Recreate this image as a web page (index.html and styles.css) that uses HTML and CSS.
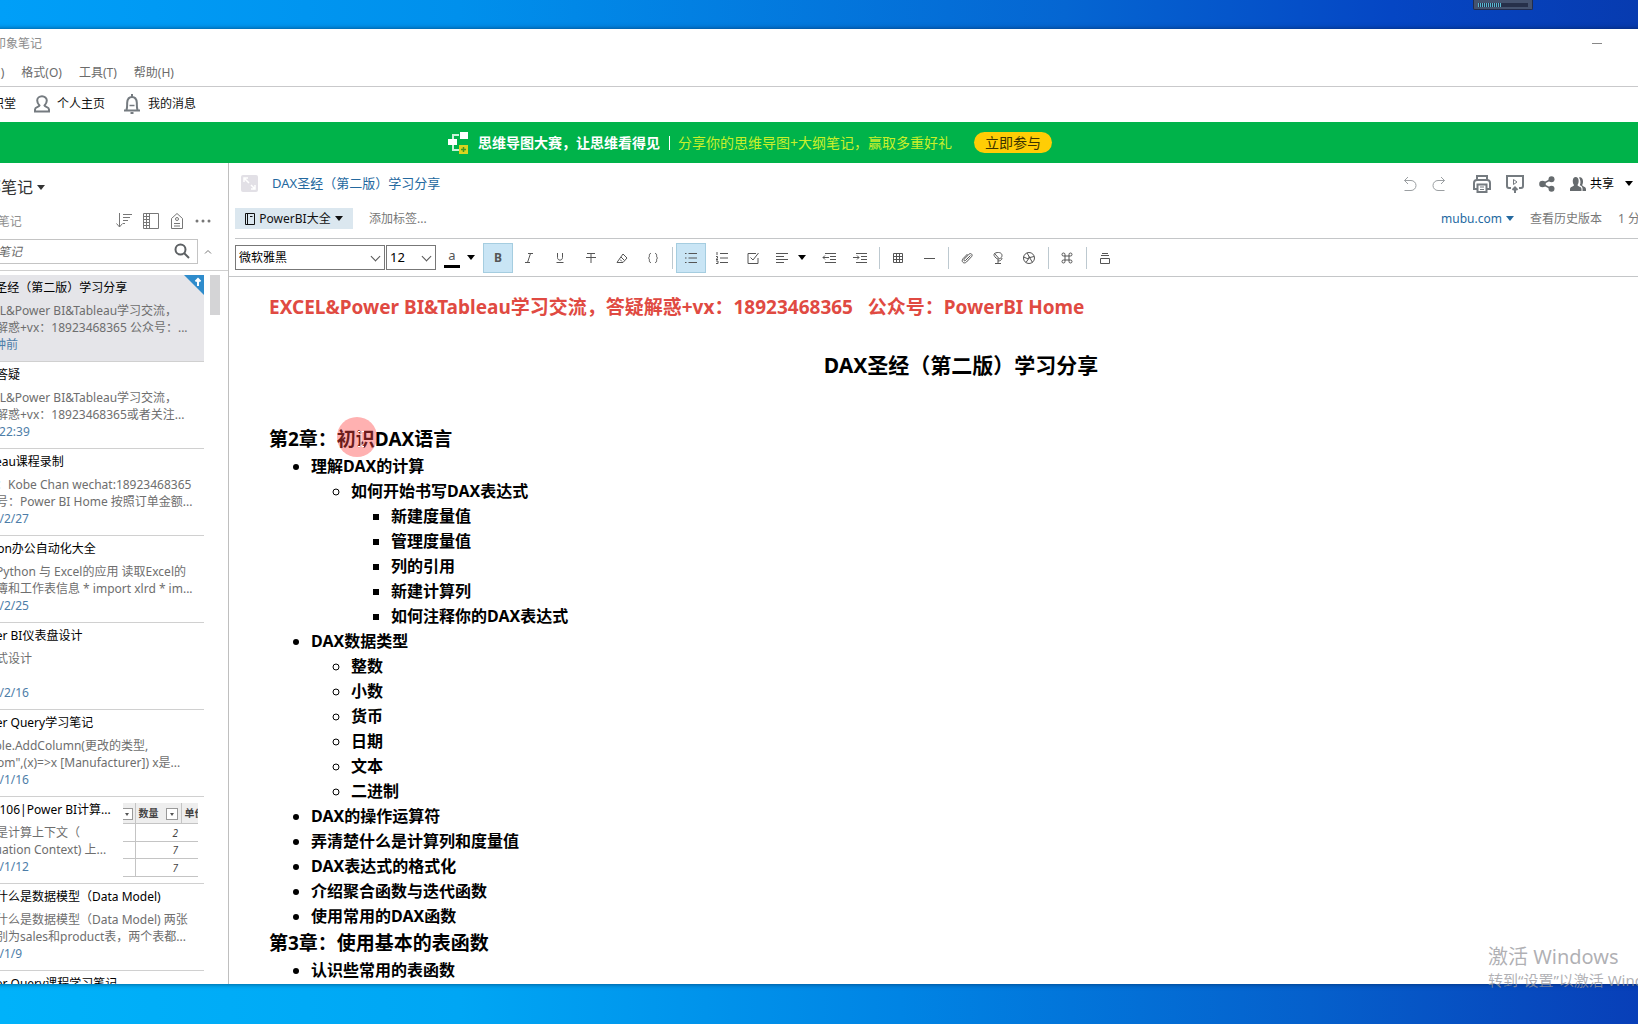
FILE: index.html
```html
<!DOCTYPE html>
<html lang="zh-CN">
<head>
<meta charset="utf-8">
<title>印象笔记</title>
<link rel="stylesheet" href="styles.css">
</head>
<body>
<svg class="defs" aria-hidden="true">
  <symbol id="caret" viewBox="0 0 8 5"><path d="M0 0h8L4 5z" fill="currentColor"/></symbol>
</svg>
<div class="desktop">
  <div class="window">
    <header class="titlebar">
      <span>印象笔记</span>
      <button class="minimize" aria-label="最小化"></button>
    </header>
    <nav class="menu">
      <a href="#">笔记(N)</a><a href="#">格式(O)</a><a href="#">工具(T)</a><a href="#">帮助(H)</a>
    </nav>
    <nav class="shortcuts">
      <a href="#">知识堂</a>
      <a href="#"><svg width="16" height="18" viewBox="0 0 16 18" class="line2"><path d="M5.500 10.500C4 9 3.200 7.500 3.200 5.500a4.800 4.300 0 0 1 9.600 0c0 2-.8 3.500-2.300 5 .3 1.500 4.500 1.500 4.500 4v2H1v-2c0-2.500 4.200-2.500 4.500-4z"/></svg>个人主页</a>
      <a href="#"><svg width="18" height="20" viewBox="0 0 18 20" class="line2"><path d="M9 0v3M1 16.500h16M3.500 16C4.500 13 4 11 4.200 8.500 4.500 5 6 3 9 3s4.500 2 4.800 5.500c.2 2.500-.3 4.500.7 7.500"/><path d="M6.500 11.500h5" stroke-width="1.500"/><path d="M7.500 19h3"/></svg>我的消息</a>
    </nav>
    <section class="banner">
      <svg width="20" height="24" viewBox="0 0 20 24"><path d="M5 8V4h6M5 13v6h6" fill="none" stroke="#c9f2d8" stroke-width="2"/><path d="M0 8h9v6H0zM12 1h8v7h-8z" fill="#fff"/><path d="M11 14h9v9h-9z" fill="#d8d420"/><path d="M15.500 16v5M13 18.500h5" stroke="#3f9a20" stroke-width="1.500"/></svg>
      <strong>思维导图大赛，让思维看得见</strong>
      <i class="bar"></i>
      <span>分享你的思维导图+大纲笔记，赢取多重好礼</span>
      <button>立即参与</button>
    </section>
    <div class="main">
      <aside class="sidebar">
        <h2 class="sidebar-title">全部笔记<svg width="8" height="5"><use href="#caret"/></svg></h2>
        <div class="meta">
          <span>37 条笔记</span>
          <button aria-label="排序"><svg width="16" height="16" viewBox="0 0 16 16" class="line"><path d="M3.500 0v14M.5 10.500l3 3.500 3-3.500M7 1.500h9M7 4.500h7M7 7.500h5M7 10.500h2"/></svg></button>
          <button aria-label="视图"><svg width="16" height="16" viewBox="0 0 16 16" class="line"><path d="M.5.5h15v15H.5zM6.500.5v15M.5 3.500h6M.5 6.500h6M.5 9.500h6M.5 12.500h6M3.500.5v15"/></svg></button>
          <button aria-label="标签"><svg width="14" height="16" viewBox="0 0 14 16" class="line"><path d="M1.500 15.500v-10L7 .5l5.500 5v10zM4 10.500h6M4 13h6"/><circle cx="7" cy="6" r="1.500"/></svg></button>
          <button aria-label="更多"><svg width="16" height="4" viewBox="0 0 16 4" fill="#777"><circle cx="2" cy="2" r="1.500"/><circle cx="8" cy="2" r="1.500"/><circle cx="14" cy="2" r="1.500"/></svg></button>
        </div>
        <div class="search">
          <label class="search-box"><input type="text" placeholder="搜索笔记" aria-label="搜索笔记"><svg width="16" height="16" viewBox="0 0 16 16" fill="none" stroke="#5c6063" stroke-width="2"><circle cx="6.500" cy="6.500" r="5"/><path d="M10 10l5 5"/></svg></label>
          <button aria-label="收起"><svg width="8" height="5" viewBox="0 0 8 5" class="line"><path d="M1 4.500l3-3 3 3"/></svg></button>
        </div>
        <div class="list">
          <div class="notes">
            <article class="note selected"><h3>DAX圣经（第二版）学习分享</h3><p>EXCEL&amp;Power BI&amp;Tableau学习交流，<br>答疑解惑+vx：18923468365 公众号：...</p><time>1 分钟前</time>
              <svg class="sync" width="20" height="20" viewBox="0 0 20 20"><path d="M0 0h20v20z" fill="#2f8ccc"/><path d="M14 11V4M11.500 6.500L14 4l2.500 2.500" fill="none" stroke="#fff" stroke-width="2"/></svg></article>
            <article class="note"><h3>学习答疑</h3><p>EXCEL&amp;Power BI&amp;Tableau学习交流，<br>答疑解惑+vx：18923468365或者关注...</p><time>昨天 22:39</time></article>
            <article class="note"><h3>Tableau课程录制</h3><p>作者：Kobe Chan wechat:18923468365<br>公众号：Power BI Home 按照订单金额...</p><time>2022/2/27</time></article>
            <article class="note"><h3>Python办公自动化大全</h3><p>一、Python 与 Excel的应用 读取Excel的<br>工作簿和工作表信息 * import xlrd * im...</p><time>2022/2/25</time></article>
            <article class="note"><h3>Power BI仪表盘设计</h3><p>交互式设计<br>&nbsp;</p><time>2022/2/16</time></article>
            <article class="note"><h3>Power Query学习笔记</h3><p>= Table.AddColumn(更改的类型,<br>Custom",(x)=&gt;x [Manufacturer]) x是...</p><time>2022/1/16</time></article>
            <article class="note with-thumb"><div><h3>Note106|Power BI计算...</h3><p>什么是计算上下文（<br>Evaluation Context) 上...</p><time>2022/1/12</time></div>
              <table class="thumb">
                <tr><th><i class="filter"></i></th><th>数量<i class="filter"></i></th><th>单价</th></tr>
                <tr><td></td><td>2</td><td></td></tr>
                <tr><td></td><td>7</td><td></td></tr>
                <tr><td></td><td>7</td><td></td></tr>
              </table></article>
            <article class="note"><h3>一、什么是数据模型（Data Model)</h3><p>一、什么是数据模型（Data Model) 两张<br>表分别为sales和product表，两个表都...</p><time>2022/1/9</time></article>
            <article class="note"><h3>Power Query课程学习笔记</h3></article>
          </div>
          <div class="scroll"><i></i></div>
        </div>
      </aside>
      <section class="editor">
        <div class="note-head">
          <svg width="17" height="17" viewBox="0 0 17 17"><rect width="17" height="17" rx="2" fill="#e2e0e6"/><path d="M3 7V3h4M3 3l5 5M14 10v4h-4M14 14l-4-4" fill="none" stroke="#fff" stroke-width="1.500"/></svg>
          <a href="#" class="note-title">DAX圣经（第二版）学习分享</a>
          <div class="actions">
            <button aria-label="撤销"><svg width="14" height="16" viewBox="0 0 14 16" class="faint"><path d="M5 1L1.500 4.500 5 8M1.500 4.500H8a5 5 0 0 1 0 10H1.500"/></svg></button>
            <button aria-label="重做"><svg width="14" height="16" viewBox="0 0 14 16" class="faint"><path d="M9 1l3.500 3.500L9 8M12.500 4.500H6a5 5 0 0 0 0 10h6.500"/></svg></button>
            <button aria-label="打印"><svg width="18" height="18" viewBox="0 0 18 18" class="line2"><path d="M4 5V1h10v4M4 14H1V8c0-2 1-3 3-3h10c2 0 3 1 3 3v6h-3M4.500 9.500h9V17h-9z"/><path d="M7 12h4M7 14.500h4" stroke-width="1"/></svg></button>
            <button aria-label="演示"><svg width="18" height="18" viewBox="0 0 18 18" class="line2"><path d="M5 13H3c-1.500 0-2-.5-2-2V1h16v10c0 1.500-.5 2-2 2h-2M9 18v-5M6.500 15L9 12.500l2.500 2.500"/><path d="M7.500 4.500v5L11 7z" stroke-width="1"/></svg></button>
            <button aria-label="分享"><svg width="16" height="16" viewBox="0 0 16 16" fill="#666b6e"><circle cx="3.500" cy="8" r="3.300"/><circle cx="12.500" cy="3.200" r="3"/><circle cx="12.500" cy="12.800" r="3"/><path d="M3 8l10-5M3 8l10 5" stroke="#666b6e" stroke-width="1.500"/></svg></button>
            <button class="share"><svg width="16" height="15" viewBox="0 0 16 15" fill="#666b6e"><path d="M4 9C2.300 7 2 1 5.700 1s3.500 6 1.800 8c0 1.500 4 1.500 4 4v2H0v-2c0-2.500 4-2.500 4-4z"/><path d="M9 1.500c4-1.500 5 5 3.200 7.500 0 1.500 3.800 1.500 3.800 4v2h-3.500v-2.500c0-1.500-1-2.500-2.700-3.200C11 7 10.500 3.500 9 1.500z"/></svg>共享<svg width="8" height="5"><use href="#caret"/></svg></button>
          </div>
        </div>
        <div class="note-info">
          <button class="notebook"><svg width="10" height="12" viewBox="0 0 10 12" fill="none" stroke="#111"><path d="M.5.5h9v11h-9zM2.500.5v11M5 3.500h2.500"/></svg>PowerBI大全<svg width="8" height="5"><use href="#caret"/></svg></button>
          <a href="#" class="tag">添加标签...</a>
          <a href="#" class="source">mubu.com<svg width="8" height="5"><use href="#caret"/></svg></a>
          <a href="#" class="history">查看历史版本</a>
          <span class="updated">1 分钟前更新</span>
        </div>
        <div class="toolbar">
          <label class="pick font"><select aria-label="字体"><option>微软雅黑</option></select></label>
          <label class="pick size"><select aria-label="字号"><option>12</option></select></label>
          <button class="color" aria-label="文字颜色"><span class="ink">a</span><svg width="8" height="5"><use href="#caret"/></svg></button>
          <button class="on" aria-label="粗体"><b>B</b></button>
          <button aria-label="斜体"><svg width="12" height="12" viewBox="0 0 12 12"><path d="M5 1.500h5M2 10.500h5M7.500 1.500l-3 9"/></svg></button>
          <button aria-label="下划线"><svg width="12" height="12" viewBox="0 0 12 12"><path d="M3.500 1v4.500c0 3.500 5 3.500 5 0V1M2.500 10.500h7"/></svg></button>
          <button aria-label="删除线"><svg width="12" height="12" viewBox="0 0 12 12"><path d="M2 1.500h8M1 5.500h10M6 1.500V11"/></svg></button>
          <button aria-label="高亮"><svg width="12" height="12" viewBox="0 0 12 12"><path d="M1 10.500h6l4-4.500-4-4-4 5.500-2 3M5 5l3.500 3.500M4 7.500l2 2"/></svg></button>
          <button aria-label="代码"><svg width="12" height="12" viewBox="0 0 12 12"><path d="M4 1.500c-3 0-.5 3.500-2.500 4.500C3.500 7 1 10.500 4 10.500M8 1.500c3 0 .5 3.500 2.500 4.500C8.500 7 11 10.500 8 10.500"/></svg></button>
          <i class="sep"></i>
          <button class="on" aria-label="项目符号"><svg width="12" height="12" viewBox="0 0 12 12"><path d="M0 1.500h1.500M0 6h1.500M0 10.500h1.500M3.500 1.500H12M3.500 6H12M3.500 10.500H12"/></svg></button>
          <button aria-label="编号"><svg width="12" height="12" viewBox="0 0 12 12"><path d="M1 0v3M0 4.500h1.500V6L0 7.500h2M0 9h2v2.500H0M4 1.500h8M4 6h8M4 10.500h8"/></svg></button>
          <button aria-label="待办"><svg width="12" height="12" viewBox="0 0 12 12"><path d="M9 1.500H1v10h10V6M3.500 5.500L6 8l5.500-7"/></svg></button>
          <button class="align" aria-label="对齐"><svg width="12" height="12" viewBox="0 0 12 12"><path d="M0 1.500h12M0 4.500h8M0 7.500h12M0 10.500h8"/></svg><svg class="arrow" width="8" height="5"><use href="#caret"/></svg></button>
          <button aria-label="减少缩进"><svg width="14" height="12" viewBox="0 0 14 12"><path d="M3 1.500h11M8 4.500h6M8 7.500h6M3 10.500h11M1 5.500h6M3 3.500l-2 2 2 2"/></svg></button>
          <button aria-label="增加缩进"><svg width="14" height="12" viewBox="0 0 14 12"><path d="M3 1.500h11M8 4.500h6M8 7.500h6M3 10.500h11M0 5.500h6M4 3.500l2 2-2 2"/></svg></button>
          <i class="sep"></i>
          <button aria-label="表格"><svg width="12" height="12" viewBox="0 0 12 12"><path d="M1.500 1.500h9v9h-9zM4.500 1.500v9M7.500 1.500v9M1.500 4.500h9M1.500 7.500h9"/></svg></button>
          <button aria-label="分隔线"><svg width="12" height="12" viewBox="0 0 12 12"><path d="M1 6.500h11"/></svg></button>
          <i class="sep"></i>
          <button aria-label="附件"><svg width="12" height="12" viewBox="0 0 12 12"><path d="M9.500 3.500l-5 5c-1 1-2.300-.3-1.300-1.300L8 2.200c1.800-1.700 4.300.6 2.500 2.500L5.500 10C2.800 12.500-.3 9.300 2 6.700L6.500 2"/></svg></button>
          <button aria-label="录音"><svg width="12" height="12" viewBox="0 0 12 12"><path d="M2.500 1.500L7 6.500M2.500 1.500C6-.5 10 .5 10 3.500S6 8 4 6 1.500 3 2.500 1.500M6 7v4M3 11.500h6M10 6c0 2-2 3-4 3"/></svg></button>
          <button aria-label="拍照"><svg width="12" height="12" viewBox="0 0 12 12"><circle cx="6" cy="6" r="5.500"/><path d="M4 1l3 5M11 4.500L5 6M9.500 10.500L6 4.500M3 10.500L6 6M.5 5l5 2"/></svg></button>
          <i class="sep"></i>
          <button aria-label="快捷键"><svg width="12" height="12" viewBox="0 0 12 12"><path d="M4 4V2.700A1.500 1.500 0 1 0 2.700 4h6.600A1.500 1.500 0 1 0 8 2.700v6.600A1.500 1.500 0 1 0 9.300 8H2.700A1.500 1.500 0 1 0 4 9.300z"/></svg></button>
          <i class="sep"></i>
          <button aria-label="模板"><svg width="12" height="12" viewBox="0 0 12 12"><path d="M3 1.500h6M2 3.500h8M1.500 6.500h9v5h-9z"/></svg></button>
        </div>
        <article class="document">
          <p class="contact">EXCEL&amp;Power BI&amp;Tableau学习交流，答疑解惑+vx：18923468365&nbsp;&nbsp; 公众号：PowerBI Home</p>
          <h1>DAX圣经（第二版）学习分享</h1>
          <h2>第2章：初识DAX语言</h2>
          <ul>
            <li>理解DAX的计算
              <ul><li>如何开始书写DAX表达式
                <ul><li>新建度量值</li><li>管理度量值</li><li>列的引用</li><li>新建计算列</li><li>如何注释你的DAX表达式</li></ul></li></ul></li>
            <li>DAX数据类型
              <ul><li>整数</li><li>小数</li><li>货币</li><li>日期</li><li>文本</li><li>二进制</li></ul></li>
            <li>DAX的操作运算符</li>
            <li>弄清楚什么是计算列和度量值</li>
            <li>DAX表达式的格式化</li>
            <li>介绍聚合函数与迭代函数</li>
            <li>使用常用的DAX函数</li>
          </ul>
          <h2>第3章：使用基本的表函数</h2>
          <ul><li>认识些常用的表函数</li></ul>
        </article>
      </section>
    </div>
  </div>
  <div class="recorder"><i></i></div>
  <div class="pointer"><svg width="8" height="16" viewBox="0 0 8 16"><path d="M1 .5h2l1 1 1-1h2M4 1.500v13M1 15.500h2l1-1 1 1h2" fill="none" stroke="#fff"/></svg></div>
  <div class="watermark"><div>激活 Windows</div><p>转到“设置”以激活 Windows。</p></div>
</div>
</body>
</html>
```
FILE: styles.css
```css
* { box-sizing: border-box; }
body, h1, h2, h3, p, ul { margin: 0; padding: 0; }
body { font: 12px/17px "Noto Sans", "Noto Sans CJK SC", sans-serif; color: #111; overflow: hidden; }
a { color: inherit; text-decoration: none; }
button { font: inherit; color: inherit; background: none; border: 0; padding: 0; display: flex; align-items: center; justify-content: center; }
svg { display: block; flex: none; }
.defs { position: absolute; width: 0; height: 0; }
.line { fill: none; stroke: #777; }
.line2 { fill: none; stroke: #757b80; stroke-width: 2; }
.faint { fill: none; stroke: #9b9fa2; }

/* desktop and window */
.desktop {
  position: relative; height: 100vh; padding: 29px 0 40px; overflow: hidden;
  background:
    linear-gradient(90deg, #009ff8, #0090ec 28%, #0566d2 65%, #0546c4 85%, #073bb0) top / 100% 29px no-repeat,
    linear-gradient(90deg, #00b2fa, #00a6f4 28%, #0084e4 55%, #0560cc 80%, #083fb8) bottom / 100% 40px no-repeat;
}
.window { display: flex; flex-direction: column; height: 100%; margin: 0 -74px 0 -36px; background: #fff; box-shadow: 0 0 5px rgba(0, 20, 50, .6); overflow: hidden; }
.titlebar { display: flex; justify-content: space-between; align-items: center; height: 30px; flex: none; padding: 0 92px 2px 30px; color: #8c8c8c; }
.minimize { width: 46px; height: 28px; }
.minimize::before { content: ""; width: 10px; height: 1px; background: #888; }
.menu { display: flex; align-items: center; gap: 17px; height: 28px; flex: none; border-bottom: 1px solid #c9c9cb; color: #6b6b6b; }
.shortcuts { display: flex; align-items: center; gap: 18px; height: 35px; flex: none; padding: 0 16px 2px; }
.shortcuts a { display: flex; align-items: center; gap: 7px; }
.banner { display: flex; align-items: center; height: 41px; flex: none; padding-left: 484px; background: #00b34a; color: #fff; font-size: 14px; }
.banner strong { margin-left: 10px; }
.banner .bar { width: 1px; height: 14px; margin: 0 8px 0 9px; background: #fff; }
.banner span { color: #c8f02a; }
.banner button { width: 78px; height: 21px; margin-left: 22px; border-radius: 11px; background: #ffcd05; color: #3b3300; }
.main { display: flex; flex: 1; min-height: 0; }

/* note list */
.sidebar { width: 265px; flex: none; border-right: 1px solid #bfbfbf; display: flex; flex-direction: column; }
.sidebar-title { display: flex; align-items: center; gap: 4px; height: 49px; flex: none; padding-left: 5px; font-size: 16px; font-weight: 400; color: #333; }
.meta { display: flex; align-items: center; gap: 11px; height: 18px; flex: none; padding: 0 17px 0 5px; color: #8f8f8f; }
.meta span { flex: 1; }
.search { display: flex; align-items: center; gap: 6px; height: 41px; flex: none; padding: 2px 16px 0 0; border-bottom: 1px solid #cfcfcf; }
.search-box { display: flex; align-items: center; width: 234px; height: 25px; padding: 0 7px 0 9px; border: 1px solid #c4c4c4; }
.search-box input { flex: 1; min-width: 0; border: 0; padding: 0; outline: 0; font: italic 12px/17px "Noto Sans", "Noto Sans CJK SC", sans-serif; }
.search-box input::placeholder { color: #666; opacity: 1; }
.list { display: flex; flex: 1; min-height: 0; padding-top: 4px; gap: 6px; overflow: hidden; }
.notes { width: 240px; }
.note { position: relative; height: 87px; padding: 4px 6px 0 8px; border-bottom: 1px solid #d0d0d0; white-space: nowrap; }
.note h3 { font-size: 12px; font-weight: 400; margin-bottom: 6px; color: #000; }
.note p { color: #6e6e6e; }
.note time { display: block; color: #4d7da8; }
.selected { background: #e5e5e9; }
.sync { position: absolute; top: 0; right: 0; }
.with-thumb { display: flex; justify-content: space-between; }
.thumb { width: 75px; height: 74px; margin-top: 2px; table-layout: fixed; border-collapse: collapse; font-size: 10px; line-height: 16px; color: #444; border-bottom: 1px solid #aaa; overflow: hidden; }
.thumb th, .thumb td { padding: 0; height: 17px; border-bottom: 1px solid #c4c4c4; overflow: hidden; text-align: left; }
.thumb th { background: #eee; white-space: nowrap; height: 20px; }
.thumb td { font-style: italic; text-align: right; padding-right: 3px; }
.thumb tr > :first-child { width: 12px; border-right: 1px solid #c4c4c4; padding: 0; }
.thumb tr > :nth-child(2) { width: 46px; }
.thumb th:nth-child(2) { padding-left: 3px; border-right: 1px solid #c4c4c4; }
.thumb th:nth-child(3) { padding-left: 3px; }
.filter { display: inline-flex; align-items: center; justify-content: center; width: 12px; height: 12px; margin-left: 7px; border: 1px solid #999; background: #fff; vertical-align: middle; }
.filter::before { content: ""; border: 2px solid transparent; border-top: 3px solid #555; border-bottom: 0; }
.thumb th:first-child .filter { margin-left: -2px; }
.scroll i { display: block; width: 10px; height: 40px; background: #d4d4d6; }

/* editor */
.editor { flex: 1; min-width: 0; display: flex; flex-direction: column; }
.note-head { display: flex; align-items: center; height: 41px; flex: none; padding-left: 12px; }
.note-title { margin-left: 14px; font-size: 13px; color: #24699f; }
.actions { display: flex; align-items: center; gap: 15px; margin-left: auto; padding-right: 79px; }
.actions button:nth-child(3) { margin-left: 12px; }
.share { gap: 4px; color: #000; }
.share svg:last-child { margin-left: 7px; }
.note-info { display: flex; align-items: center; height: 35px; flex: none; margin-left: 6px; border-bottom: 1px solid #c4c6c8; padding-bottom: 5px; color: #777; }
.notebook { width: 118px; height: 21px; gap: 4px; background: #dbe7ef; color: #111; }
.tag { margin-left: 16px; }
.source { display: flex; align-items: center; gap: 4px; margin-left: auto; color: #24699f; }
.history { margin-left: 16px; }
.updated { width: 94px; margin-left: 16px; }
.toolbar { display: flex; align-items: center; gap: 1px; height: 38px; flex: none; padding-left: 6px; border-bottom: 1px solid #c4c6c8; color: #555; }
.toolbar button { width: 30px; height: 30px; border: 1px solid transparent; }
.toolbar .on { background: #c9e5f5; border-color: #a5cde0; }
.toolbar svg { fill: none; stroke: #555; }
.toolbar .color svg, .toolbar .arrow { color: #000; stroke: none; }
.toolbar .color { width: 45px; gap: 7px; }
.toolbar .align { width: 44px; gap: 10px; }
.ink { width: 16px; height: 21px; border-bottom: 3px solid #000; font-size: 13px; line-height: 16px; }
.sep { width: 1px; height: 22px; margin: 0 2px 0 3px; background: #bdc9d0; }
.pick { position: relative; display: flex; height: 25px; }
.pick.font { width: 150px; }
.pick.size { width: 50px; }
.pick select { appearance: none; width: 100%; border: 1px solid #777; border-radius: 0; background: #fff; padding: 0 3px; font: 12px/17px "Noto Sans", "Noto Sans CJK SC", sans-serif; color: #000; }
.pick.size select { font-size: 13px; }
.pick::after { content: ""; position: absolute; right: 6px; top: 8px; width: 6px; height: 6px; border: solid #555; border-width: 0 1px 1px 0; transform: rotate(45deg); pointer-events: none; }
.document { flex: 1; min-height: 0; overflow: hidden; padding: 16px 59px 0 40px; color: #000; font-weight: 700; }
.contact { margin-bottom: 27px; font-size: 19px; line-height: 29px; color: #e04a42; }
.document h1 { margin-bottom: 44px; font-size: 21px; line-height: 32px; text-align: center; }
.document h2 { font-size: 19px; line-height: 29px; }
.document ul { padding-left: 42px; font-size: 16px; line-height: 25px; }
.document ul ul { padding-left: 40px; }

/* things lying over the window */
.recorder { position: absolute; top: 0; right: 105px; width: 60px; height: 10px; padding: 3px 4px; background: #45536f; border: 1px solid #222c4c; border-top: 0; border-radius: 0 0 2px 2px; }
.recorder i { display: block; height: 4px; background: repeating-linear-gradient(90deg, #59b6cf 0 1px, transparent 1px 2px) left / 24px 4px no-repeat, #26304a; }
.pointer { position: absolute; left: 337px; top: 417px; width: 40px; height: 40px; padding: 14px 0 0 20px; border-radius: 50%; background: rgba(255, 70, 70, .42); }
.watermark { position: absolute; right: 0; bottom: 34px; width: 150px; overflow: hidden; white-space: nowrap; color: rgba(150, 150, 155, .75); font-size: 20px; line-height: 26px; }
.watermark p { font-size: 15px; line-height: 20px; }
```
